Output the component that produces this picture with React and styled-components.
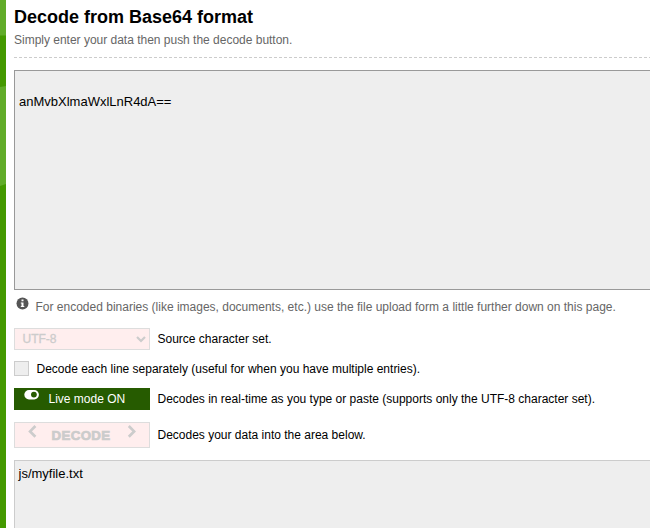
import React from "react";
import styled, { createGlobalStyle } from "styled-components";

const GlobalStyle = createGlobalStyle`
  * {
    box-sizing: border-box;
  }
  body {
    margin: 0;
    background: #fff;
    font-family: "Liberation Sans", Arial, sans-serif;
    font-size: 12px;
    color: #000;
    overflow: hidden;
  }
`;

const Page = styled.div`
  display: flex;
  height: 528px;
  overflow: hidden;
`;

const Stripe = styled.svg`
  flex: none;
  width: 6px;
  height: 528px;
`;

const Content = styled.main`
  flex: 1;
  min-width: 0;
  padding-left: 8px;
`;

const Header = styled.header`
  height: 58px;
  padding-top: 6px;
`;

const Title = styled.h1`
  margin: 0;
  font-size: 18px;
  line-height: 22px;
  white-space: nowrap;
`;

const Subtitle = styled.p`
  margin: 4px 0 0;
  line-height: 16px;
  letter-spacing: -0.01px;
  color: #666;
`;

const Divider = styled.div`
  height: 1px;
  margin-top: 9px;
  background: repeating-linear-gradient(
    to right,
    #ccc 0 3px,
    transparent 3px 5px
  );
`;

const TextBox = styled.textarea`
  display: block;
  width: 100%;
  height: ${(props) => props.$height}px;
  margin: 12px 0 0;
  padding: ${(props) => props.$padding};
  border: 1px solid ${(props) => props.$border};
  border-right: none;
  border-radius: 0;
  outline: none;
  resize: none;
  overflow: hidden;
  background: #eee;
  color: #000;
  font-family: inherit;
  font-size: 13px;
  line-height: 16px;
`;

const Info = styled.div`
  display: flex;
  height: 38px;
  padding: 7px 0 0 2px;
  color: #666;
  line-height: 20px;
  white-space: nowrap;

  svg {
    flex: none;
    margin: 0 6.5px 0 0;
  }
`;

const Row = styled.div`
  display: flex;
  align-items: center;
  height: ${(props) => props.$height}px;
  margin-bottom: ${(props) => props.$gap}px;
  line-height: 16px;
  white-space: nowrap;
`;

const Label = styled.span`
  margin-left: 7.5px;
`;

const Control = styled.button`
  display: flex;
  align-items: center;
  flex: none;
  width: 136px;
  height: 100%;
  margin: 0;
  padding: 0;
  border: 1px solid #ddd;
  background: #fee;
  color: #ccc;
  font-family: inherit;
  font-size: 12px;
  font-weight: bold;
`;

const CharsetSelect = styled(Control)`
  justify-content: space-between;
  padding: 0 3px 0 7.5px;
  font-weight: normal;
  -webkit-text-stroke: 0.3px #ccc;
`;

const LiveButton = styled(Control)`
  align-items: flex-start;
  padding: 1px 0 0 9px;
  border-color: #265b00;
  background: #265b00;
  color: #fff;
  font-weight: normal;

  span {
    margin: 1px 0 0 9.5px;
    line-height: 16px;
  }
`;

const DecodeButton = styled(Control)`
  align-items: flex-start;
  justify-content: space-between;
  padding: 2px 13px 0;
  font-size: 13.33px;

  span {
    margin: 3px 2px 0 0;
    line-height: 16px;
    letter-spacing: 0.35px;
    -webkit-text-stroke: 0.7px #ccc;
  }
`;

const Checkbox = styled.span`
  flex: none;
  width: 15px;
  height: 15px;
  border: 1px solid #ccc;
  background: #eee;
`;

const InfoIcon = () => (
  <svg width="13" height="13" viewBox="0 0 13 13">
    <circle cx="6.5" cy="6.5" r="6" fill="#555" />
    <path d="M5.5 2.5h2v1.8h-2zM4.8 5.4h2.7v3.5h.8V10H4.8V8.9h.7V6.4h-.7z" fill="#fff" />
  </svg>
);

const ToggleIcon = () => (
  <svg width="15" height="10" viewBox="0 0 15 10">
    <rect x="0.3" y="0" width="14.6" height="9.4" rx="4.7" fill="#fff" />
    <circle cx="9.9" cy="4.6" r="2.9" fill="#265b00" />
  </svg>
);

const Chevron = ({ width, height, d, stroke }) => (
  <svg width={width} height={height} viewBox={`0 0 ${width} ${height}`}>
    <path d={d} fill="none" stroke="#ccc" strokeWidth={stroke} />
  </svg>
);

const App = () => (
  <>
    <GlobalStyle />
    <Page>
      <Stripe viewBox="0 0 6 528">
        <rect width="6" height="528" fill="#490" />
        <path d="M0 0h6v35.5H0zM0 87l6-1v98l-6 2z" fill="#61ac29" />
      </Stripe>
      <Content>
        <Header>
          <Title>Decode from Base64 format</Title>
          <Subtitle>Simply enter your data then push the decode button.</Subtitle>
          <Divider />
        </Header>
        <TextBox
          $height={220}
          $padding="23px 4px"
          $border="#999"
          readOnly
          value="anMvbXlmaWxlLnR4dA=="
        />
        <Info>
          <InfoIcon />
          <span>
            For encoded binaries (like images, documents, etc.) use the file
            upload form a little further down on this page.
          </span>
        </Info>
        <Row $height={22} $gap={11}>
          <CharsetSelect disabled>
            <span>UTF-8</span>
            <Chevron width={10} height={8} d="M1 2l4 4 4-4" stroke={2.2} />
          </CharsetSelect>
          <Label>Source character set.</Label>
        </Row>
        <Row $height={15} $gap={12}>
          <Checkbox />
          <Label>
            Decode each line separately (useful for when you have multiple
            entries).
          </Label>
        </Row>
        <Row $height={22} $gap={12}>
          <LiveButton>
            <ToggleIcon />
            <span>Live mode ON</span>
          </LiveButton>
          <Label>
            Decodes in real-time as you type or paste (supports only the UTF-8
            character set).
          </Label>
        </Row>
        <Row $height={26} $gap={0}>
          <DecodeButton disabled>
            <Chevron width={9} height={13} d="M7.4 1L2.1 6.4l5.3 5.4" stroke={2.7} />
            <span>DECODE</span>
            <Chevron width={9} height={13} d="M1.8 1l5.3 5.4-5.3 5.4" stroke={2.7} />
          </DecodeButton>
          <Label>Decodes your data into the area below.</Label>
        </Row>
        <TextBox
          $height={80}
          $padding="5px 3.5px"
          $border="#ccc"
          readOnly
          value="js/myfile.txt"
        />
      </Content>
    </Page>
  </>
);

export default App;
